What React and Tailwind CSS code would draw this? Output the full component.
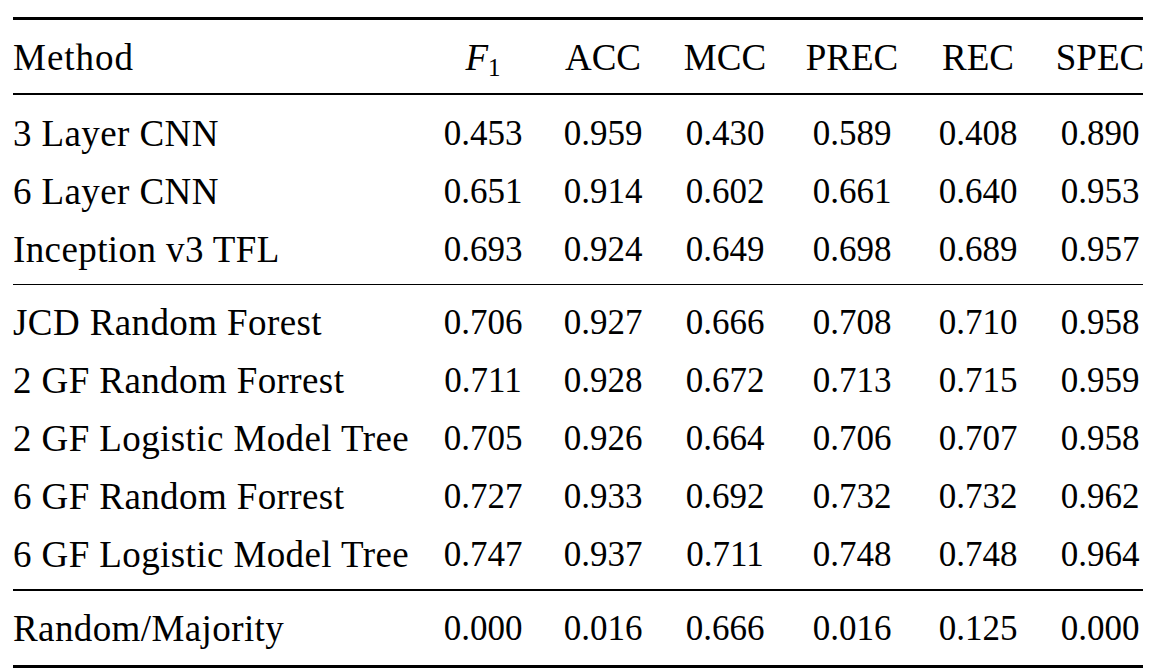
const header = ['ACC', 'MCC', 'PREC', 'REC', 'SPEC'];

const groups = [
  [
    ['3 Layer CNN', '0.453', '0.959', '0.430', '0.589', '0.408', '0.890'],
    ['6 Layer CNN', '0.651', '0.914', '0.602', '0.661', '0.640', '0.953'],
    ['Inception v3 TFL', '0.693', '0.924', '0.649', '0.698', '0.689', '0.957'],
  ],
  [
    ['JCD Random Forest', '0.706', '0.927', '0.666', '0.708', '0.710', '0.958'],
    ['2 GF Random Forrest', '0.711', '0.928', '0.672', '0.713', '0.715', '0.959'],
    ['2 GF Logistic Model Tree', '0.705', '0.926', '0.664', '0.706', '0.707', '0.958'],
    ['6 GF Random Forrest', '0.727', '0.933', '0.692', '0.732', '0.732', '0.962'],
    ['6 GF Logistic Model Tree', '0.747', '0.937', '0.711', '0.748', '0.748', '0.964'],
  ],
  [['Random/Majority', '0.000', '0.016', '0.666', '0.016', '0.125', '0.000']],
];

const cols = 'grid grid-cols-[410px_120px_120px_124px_130px_122px_122px]';

function Row({ cells }) {
  return (
    <div className={`${cols} h-[58px] leading-[58px]`}>
      {cells.map((c, i) =>
        i === 0 ? (
          <div key={i} className="text-left whitespace-nowrap text-[37px] tracking-[0.4px]">
            {c}
          </div>
        ) : (
          <div key={i} className="text-center">
            {c}
          </div>
        )
      )}
    </div>
  );
}

export default function App() {
  return (
    <div
      className="bg-white w-[1163px] h-[671px] pl-[13px] pt-[17px] text-[35px] text-black"
      style={{ fontFamily: '"Liberation Serif", serif' }}
    >
      <div className="w-[1130px] h-[3px] bg-black"></div>
      <div className={`${cols} h-[73px] items-center leading-[58px] pt-[3px] text-[37px]`}>
        <div className="tracking-[1px]">Method</div>
        <div className="text-center">
          <span className="italic">F</span>
          <sub className="text-[25px] not-italic relative top-[6px]">1</sub>
        </div>
        {header.map((h) => (
          <div key={h} className="text-center">{h}</div>
        ))}
      </div>
      <div className="w-[1130px] h-[2px] bg-black"></div>

      <div className="pt-[10px] pb-[5px]">
        {groups[0].map((r) => (
          <Row key={r[0]} cells={r} />
        ))}
      </div>
      <div className="w-[1130px] h-px bg-black"></div>

      <div className="pt-[9px] pb-[5px]">
        {groups[1].map((r) => (
          <Row key={r[0]} cells={r} />
        ))}
      </div>
      <div className="w-[1130px] h-[2px] bg-black"></div>

      <div className="pt-[9px] pb-[7px]">
        {groups[2].map((r) => (
          <Row key={r[0]} cells={r} />
        ))}
      </div>
      <div className="w-[1130px] h-[3px] bg-black"></div>
    </div>
  );
}
